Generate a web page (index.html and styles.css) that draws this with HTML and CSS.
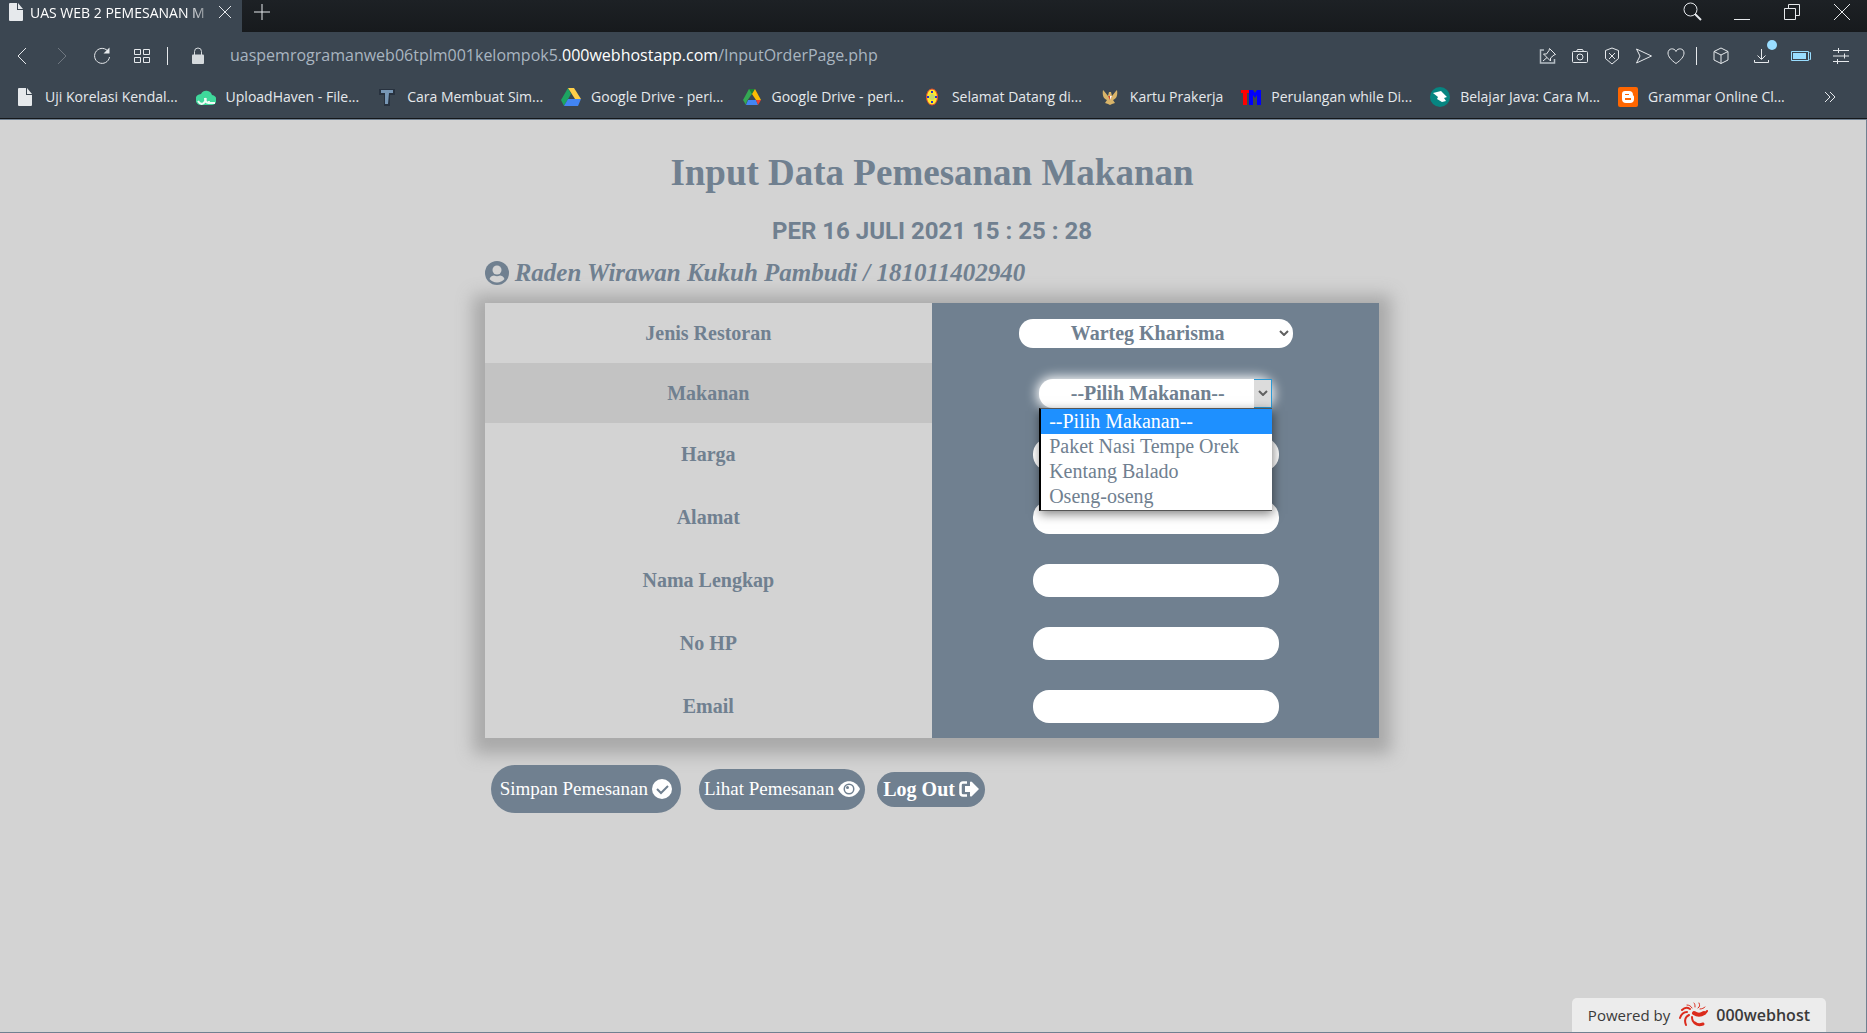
FILE: index.html
```html
<!DOCTYPE html>
<html lang="id">
<head>
<meta charset="utf-8">
<title>UAS WEB 2 PEMESANAN MAKANAN</title>
<link rel="stylesheet" href="styles.css">
</head>
<body>
<header class="browser">
  <div class="tabstrip">
    <div class="tab">
      <svg class="file" width="14" height="18" viewBox="0 0 14 18"><path fill="#e6e9ec" d="M1 0h7v7h6v10a1 1 0 0 1-1 1H1a1 1 0 0 1-1-1V1a1 1 0 0 1 1-1zM9 0l5 6H9z"/></svg>
      <span class="tab-title">UAS WEB 2 PEMESANAN M</span>
      <button class="icon-btn" aria-label="Tutup tab"><svg width="14" height="14" viewBox="0 0 14 14"><path d="M1 1l12 12M13 1L1 13"/></svg></button>
    </div>
    <button class="icon-btn new-tab" aria-label="Tab baru"><svg width="16" height="16" viewBox="0 0 16 16"><path d="M8 0v16M0 8h16"/></svg></button>
    <div class="window-buttons">
      <button class="icon-btn" aria-label="Cari"><svg width="20" height="20" viewBox="0 0 20 20"><circle cx="8.500" cy="7.500" r="6.500"/><path stroke-width="2" d="M13 12l6 6"/></svg></button>
      <button class="icon-btn" aria-label="Kecilkan"><svg width="20" height="20" viewBox="0 0 20 20"><path d="M2 17.500h16"/></svg></button>
      <button class="icon-btn" aria-label="Pulihkan"><svg width="20" height="20" viewBox="0 0 20 20"><path d="M2.500 6.500h11v11h-11zM6.500 6.500v-4h11v11h-4"/></svg></button>
      <button class="icon-btn" aria-label="Tutup"><svg width="20" height="20" viewBox="0 0 20 20"><path d="M2 2l16 16M18 2L2 18"/></svg></button>
    </div>
  </div>
  <div class="toolbar">
    <div class="nav">
      <button class="icon-btn" aria-label="Kembali"><svg width="20" height="20" viewBox="0 0 20 20"><path d="M14 2L6 10l8 8"/></svg></button>
      <button class="icon-btn dim" aria-label="Maju"><svg width="20" height="20" viewBox="0 0 20 20"><path d="M6 2l8 8-8 8"/></svg></button>
      <button class="icon-btn" aria-label="Muat ulang"><svg width="20" height="20" viewBox="0 0 20 20"><path d="M16.500 6A7.500 7.500 0 1 0 17.500 11"/><path fill="#e6e9ec" stroke="none" d="M17.500 1.500v6h-6z"/></svg></button>
      <button class="icon-btn" aria-label="Panggilan cepat"><svg width="20" height="20" viewBox="0 0 20 20"><path d="M2.500 3.500h6v5h-6zM11.500 3.500h6v5h-6zM2.500 11.500h6v5h-6zM11.500 11.500h6v5h-6z"/></svg></button>
    </div>
    <span class="divider"></span>
    <svg class="lock" width="12" height="18" viewBox="0 0 12 18"><path fill="none" stroke="#d5dadd" d="M2.500 8V4.500a3.500 3.500 0 0 1 7 0V8"/><rect y="7.500" width="12" height="9.500" rx="1" fill="#d5dadd"/></svg>
    <div class="url">uaspemrogramanweb06tplm001kelompok5.<strong>000webhostapp.com</strong>/InputOrderPage.php</div>
    <div class="tools">
      <button class="icon-btn" aria-label="Sematkan"><svg width="20" height="20" viewBox="0 0 20 20"><path stroke-width="1.500" stroke="#b5bdc4" d="M6 4H2.500v13h14v-4"/><path d="M11.500 2.500l6 6-1.500.5-3.500 3v3l-7-7h3l2.500-3.500zM9 11.500L5 15"/></svg></button>
      <button class="icon-btn" aria-label="Cuplikan"><svg width="20" height="20" viewBox="0 0 20 20"><rect x="2.500" y="5.500" width="15" height="11" rx="1"/><path d="M6.500 5.500l1-2h5l1 2"/><circle cx="10" cy="11" r="3"/></svg></button>
      <button class="icon-btn" aria-label="Pemblokir iklan"><svg width="20" height="20" viewBox="0 0 20 20"><path d="M10 2l6.500 2.500v8L10 18l-6.500-5.500v-8zM7 7l6 6M13 7l-6 6"/></svg></button>
      <button class="icon-btn" aria-label="Kirim"><svg width="20" height="20" viewBox="0 0 20 20"><path d="M2.500 3l15 7-15 7L6 10z"/></svg></button>
      <button class="icon-btn" aria-label="Bookmark"><svg width="20" height="20" viewBox="0 0 20 20"><path d="M10 17.500C5 14 2 10.500 2 7c0-5 6.500-5.500 8-1.500C11.500 1.500 18 2 18 7c0 3.500-3 7-8 10.500z"/></svg></button>
    </div>
    <span class="divider"></span>
    <div class="extras">
      <button class="icon-btn" aria-label="Ekstensi"><svg width="20" height="20" viewBox="0 0 20 20"><path d="M10 2l7 3.500v8.500l-7 3.500-7-3.500V5.500zM3 5.500L10 9l7-3.500M10 9v8.500"/></svg></button>
      <button class="icon-btn download" aria-label="Unduhan"><svg width="20" height="20" viewBox="0 0 20 20"><path d="M10.500 3v10M6.500 9.500l4 4 4-4M3.500 14v2.500h14V14"/></svg></button>
      <button class="icon-btn" aria-label="Baterai"><svg width="20" height="20" viewBox="0 0 20 20"><path stroke="#99ddff" d="M.5 5.500h17v9H.5zM18.500 6.500h1v7h-1"/><path fill="#99ddff" stroke="none" d="M2 7h13v6H2z"/></svg></button>
      <button class="icon-btn" aria-label="Pengaturan"><svg width="20" height="20" viewBox="0 0 20 20"><path d="M2 4.500h16M2 10h16M2 15.500h16M7.500 2v5M13.500 7.500v5M6.500 13v5"/></svg></button>
    </div>
  </div>
  <nav class="bookmarks">
    <a href="#"><svg width="20" height="18" viewBox="0 0 20 18"><path fill="#e6e9ec" d="M4 0h7v7h6v10a1 1 0 0 1-1 1H4a1 1 0 0 1-1-1V1a1 1 0 0 1 1-1zM12 0l5 6h-5z"/></svg>Uji Korelasi Kendal...</a>
    <a href="#"><svg width="20" height="18" viewBox="0 0 20 18"><path fill="#3fd89b" d="M5 6a6 6 0 0 1 11 1 5 5 0 0 1-1 10H5A5 5 0 0 1 5 6z"/><path fill="none" stroke="#eefbf5" stroke-width="2" d="M2 13c3 5 7 3 8-3M9 10c0 5 4 6 4 3M12 15h7"/></svg>UploadHaven - File...</a>
    <a href="#"><svg width="20" height="18" viewBox="0 0 20 18"><path fill="#28323f" d="M2 1h16v6h-5v11H7V7H2z"/><path fill="#7897b5" d="M4 2h12v3h-4l-1 11H8V5H4z"/></svg>Cara Membuat Sim...</a>
    <a href="#"><svg width="20" height="18" viewBox="0 0 20 18"><path fill="#1da462" d="M7 0L0 12l3 6 7-12z"/><path fill="#ffcf48" d="M7 0h6l7 11h-6z"/><path fill="#4285f4" d="M7 11h13l-3 7H3z"/></svg>Google Drive - peri...</a>
    <a href="#"><svg width="20" height="18" viewBox="0 0 20 18"><path fill="#34a853" d="M7 1h3v5L5 13l-1 4-3-5z"/><path fill="#188038" d="M7 1h6l-3 5z"/><path fill="#fbbc04" d="M13 1l6 11h-5l-4-6z"/><path fill="#4285f4" d="M6 12h8l2 5H4z"/><path fill="#ea4335" d="M14 12h5l-3 5z"/></svg>Google Drive - peri...</a>
    <a href="#"><svg width="20" height="18" viewBox="0 0 20 18"><ellipse cx="10" cy="9" rx="5.500" ry="8" fill="#ffe92b" stroke="#e6492d"/><circle cx="10" cy="9" r="3" fill="#c5db6a"/><path fill="#2a35c9" d="M9 3h2v2H9zM9 13h2v2H9zM5 8h2v2H5zM13 8h2v2h-2z"/></svg>Selamat Datang di...</a>
    <a href="#"><svg width="20" height="18" viewBox="0 0 20 18"><path fill="#d9b469" d="M3 2l1 1 4 5 1-4h2l1 4 4-5 1-1c1 6-1 9-4 10l2 3-3 1-2 1-2-1-3-1 2-3C4 11 2 8 3 2z"/><path fill="#cb4635" d="M8 8h4l-2 4z"/><path fill="#fff" d="M10 8h2l-2 4z"/></svg>Kartu Prakerja</a>
    <a href="#"><svg width="20" height="18" viewBox="0 0 20 18"><path fill="#f00" d="M0 2h8v3H6v12H2V5H0z"/><path fill="#00f" d="M8 2h4l2 3 2-3h4v15h-4V7l-2 3-2-3v10H8z"/></svg>Perulangan while Di...</a>
    <a href="#"><svg width="20" height="20" viewBox="0 0 20 20"><circle cx="10" cy="10" r="10" fill="#078581"/><path fill="#fff" d="M3 6l8-2 6 6-3 1 2 3-4 1-5-3 1-2z"/></svg>Belajar Java: Cara M...</a>
    <a href="#"><svg width="20" height="20" viewBox="0 0 20 20"><rect width="20" height="20" rx="2" fill="#ff6600"/><path fill="#fff" fill-rule="evenodd" d="M7 4h4a4 4 0 0 1 4 4c0 1 1 0 1 2v2a4 4 0 0 1-4 4H8a4 4 0 0 1-4-4V7a3 3 0 0 1 3-3zm0 3v1h4V7zm0 4v2h6v-2z"/></svg>Grammar Online Cl...</a>
    <button class="icon-btn more" aria-label="Bookmark lainnya"><svg width="12" height="12" viewBox="0 0 12 12"><path d="M1 1l5 5-5 5M6 1l5 5-5 5"/></svg></button>
  </nav>
</header>

<div class="page">
  <main class="order">
    <h1>Input Data Pemesanan Makanan</h1>
    <p class="clock">PER 16 JULI 2021 15 : 25 : 28</p>
    <p class="user">
      <svg width="24" height="24" viewBox="0 0 24 24"><circle cx="12" cy="12" r="12" fill="#708090"/><circle cx="12" cy="9" r="4.500" fill="#d3d3d3"/><path fill="#d3d3d3" d="M4.500 18c1-3 3-3.500 4.500-3.500 2 1 4 1 6 0 1.500 0 3.500.5 4.500 3.500a10 10 0 0 1-15 0z"/></svg>
      Raden Wirawan Kukuh Pambudi / 181011402940
    </p>
    <form id="order-form">
      <table class="fields">
        <tr>
          <th><label for="resto">Jenis Restoran</label></th>
          <td>
            <div class="pick pick-resto">
              <select id="resto"><option>Warteg Kharisma</option></select>
              <span class="arrow"><svg width="10" height="6" viewBox="0 0 10 6"><path d="M1 1l4 4 4-4"/></svg></span>
            </div>
          </td>
        </tr>
        <tr class="active">
          <th><label for="makanan">Makanan</label></th>
          <td>
            <div class="pick pick-open">
              <select id="makanan"><option>--Pilih Makanan--</option><option>Paket Nasi Tempe Orek</option><option>Kentang Balado</option><option>Oseng-oseng</option></select>
              <span class="arrow"><svg width="10" height="6" viewBox="0 0 10 6"><path d="M1 1l4 4 4-4"/></svg></span>
              <ul class="menu">
                <li class="selected">--Pilih Makanan--</li>
                <li>Paket Nasi Tempe Orek</li>
                <li>Kentang Balado</li>
                <li>Oseng-oseng</li>
              </ul>
            </div>
          </td>
        </tr>
        <tr class="text-row"><th><label for="harga">Harga</label></th><td><input id="harga" type="text"></td></tr>
        <tr class="text-row"><th><label for="alamat">Alamat</label></th><td><input id="alamat" type="text"></td></tr>
        <tr class="text-row"><th><label for="nama">Nama Lengkap</label></th><td><input id="nama" type="text"></td></tr>
        <tr class="text-row"><th><label for="hp">No HP</label></th><td><input id="hp" type="tel"></td></tr>
        <tr class="text-row"><th><label for="email">Email</label></th><td><input id="email" type="email"></td></tr>
      </table>
    </form>
    <div class="actions">
      <button class="save" type="submit" form="order-form">Simpan Pemesanan <svg width="20" height="20" viewBox="0 0 20 20"><circle cx="10" cy="10" r="10" fill="#fff"/><path fill="none" stroke="#708090" stroke-width="2" d="M5 10l4 4 7-7"/></svg></button>
      <button class="view" type="button">Lihat Pemesanan <svg width="22" height="16" viewBox="0 0 22 16"><path fill="#fff" d="M0 8c5-10.500 17-10.500 22 0-5 10.500-17 10.500-22 0z"/><circle cx="11" cy="8" r="5.500" fill="#708090"/><circle cx="11" cy="8" r="4" fill="#fff"/><circle cx="9.500" cy="6.500" r="1.500" fill="#708090"/></svg></button>
      <button class="logout" type="button">Log Out <svg width="20" height="16" viewBox="0 0 20 16"><path fill="none" stroke="#fff" stroke-width="2.500" d="M8 1.500H4A2.500 2.500 0 0 0 1.500 4v8A2.500 2.500 0 0 0 4 14.500h4"/><path fill="#fff" d="M6 5h5V1q1-1 2 0l7 7-7 7q-1 1-2 0v-4H6z"/></svg></button>
    </div>
  </main>
  <a class="badge" href="#">Powered by
    <svg width="30" height="26" viewBox="0 0 30 26"><g fill="none" stroke="#db2b1c" stroke-linecap="round"><path stroke-width="4" d="M26 11c-3 2-7 2-10 0"/><path stroke-width="2" d="M29 9c-1 2-3 3-5 3M14 15c0 3 1 5 3 6"/><path stroke-width="3" d="M17 21c2 2 5 2 8 1"/><path stroke-width="2" d="M11 13c-4 2-5 5-3 10M9 10c-4 0-6 3-7 6M12 7c-3-2-6-1-8 1"/><path stroke-width="1" d="M14 6c-1-2-3-3-5-3M17 5c0-2 0-3-1-4M20 6c2-1 2-3 1-5M22 7c2 0 4-1 5-2"/></g></svg>
    <strong>000webhost</strong>
  </a>
</div>
</body>
</html>
```
FILE: styles.css
```css
* { box-sizing: border-box; }

body {
  margin: 0;
  min-height: 100vh;
  display: flex;
  flex-direction: column;
  background: #d3d3d3;
  color: #708090;
  font-family: "Liberation Serif", "Times New Roman", serif;
  font-size: 20px;
}

button, input, select { font: inherit; color: inherit; border: 0; margin: 0; }

/* browser bar */
.browser {
  background: #3b4651;
  color: #e6e9ec;
  font-family: "Open Sans", "Noto Sans", sans-serif;
  font-size: 14px;
  border-bottom: 1px solid #14171a;
}

.icon-btn {
  display: flex;
  padding: 0;
  background: none;
}
.icon-btn svg { fill: none; stroke: #e6e9ec; }
.dim { opacity: 0.3; }

.tabstrip {
  display: flex;
  align-items: center;
  height: 32px;
  background: linear-gradient(#1d2125, #171a1d);
}
.tab {
  display: flex;
  align-items: center;
  width: 242px;
  height: 32px;
  padding: 0 10px 8px 9px;
  background: #3b4651;
  color: #fff;
}
.tab-title {
  flex: 1;
  margin: 0 2px 0 7px;
  white-space: nowrap;
  -webkit-mask-image: linear-gradient(to right, #000 85%, transparent);
  mask-image: linear-gradient(to right, #000 85%, transparent);
}
.new-tab { margin: 0 0 8px 12px; }
.window-buttons {
  display: flex;
  gap: 30px;
  margin: 0 15px 8px auto;
}

.toolbar {
  display: flex;
  align-items: center;
  height: 48px;
  padding: 0 16px 0 12px;
}
.nav, .extras { display: flex; gap: 20px; }
.nav { margin-right: 15px; }
.tools { display: flex; gap: 12px; margin-right: 10px; }
.extras { margin-left: 14px; }
.divider { width: 1px; height: 18px; background: #e6e9ec; }
.lock { margin: 0 26px 0 24px; }
.url { flex: 1; padding-bottom: 2px; font-size: 16px; color: #a9b5c0; }
.url strong { font-weight: 400; color: #fff; }
.download { position: relative; }
.download::after {
  content: "";
  position: absolute;
  right: -6px;
  top: -6px;
  width: 10px;
  height: 10px;
  border-radius: 50%;
  background: #99ddff;
}

.bookmarks {
  display: flex;
  align-items: center;
  gap: 18px;
  height: 38px;
  padding: 0 31px 5px 15px;
}
.bookmarks a {
  display: flex;
  align-items: center;
  gap: 10px;
  color: inherit;
  text-decoration: none;
  white-space: nowrap;
}
.more { margin-left: auto; }

/* page */
.page {
  flex: 1;
  display: flex;
  flex-direction: column;
  padding-right: 2px;
  border: 1px solid #708090;
  border-left: 0;
}
.order { width: 48%; margin: 0 auto; }

h1 {
  margin: 32px 0 21px;
  font-size: 37px;
  line-height: 42px;
  text-align: center;
}
.clock {
  margin: 0 0 10px;
  font-family: Roboto, "Liberation Sans", sans-serif;
  font-size: 24px;
  line-height: 32px;
  font-weight: 700;
  text-align: center;
}
.user {
  display: flex;
  align-items: center;
  gap: 6px;
  margin: 0 0 14px;
  font-size: 25px;
  line-height: 32px;
  font-weight: 700;
  font-style: italic;
  white-space: nowrap;
}

.fields {
  width: 100%;
  table-layout: fixed;
  border-collapse: collapse;
  box-shadow: 0 4px 16px 12px #a9a9a9;
}
.fields th, .fields td { height: 60px; padding: 0; }
.fields .text-row th, .fields .text-row td { height: 63px; }
.fields th { background: #d3d3d3; }
.fields .active th { background: #c3c3c3; }
.fields td { background: #708090; }
.fields input {
  display: block;
  width: 55%;
  height: 33px;
  margin: 0 auto;
  padding: 0 16px;
  border-radius: 16px;
  background: #fff;
}

.pick {
  position: relative;
  display: grid;
  height: 29px;
  margin: 0 auto;
}
.pick-resto { width: 274px; }
.pick-open { width: 233px; }
.pick select, .arrow { grid-area: 1 / 1; }
.pick select {
  appearance: none;
  width: 100%;
  height: 29px;
  padding: 0 16px 0 0;
  border-radius: 14px;
  background: #fff;
  font-weight: 700;
  line-height: 29px;
  text-align: center;
  text-align-last: center;
}
.pick-open select { box-shadow: 0 0 12px 2px #fff; }
.arrow {
  display: flex;
  align-items: center;
  justify-content: center;
  justify-self: end;
  width: 18px;
  pointer-events: none;
}
.arrow svg { fill: none; stroke: #606060; stroke-width: 2; }
.pick-open .arrow {
  z-index: 1;
  background: #dcdcdc;
  border: 1px solid #2a9ad6;
  border-left: 0;
}
.menu {
  position: absolute;
  z-index: 2;
  top: 100%;
  left: 0;
  width: 100%;
  margin: 0;
  padding: 0 0 1px;
  list-style: none;
  background: #fff;
  border: 1px solid #555;
  border-left: 2px solid #000;
  border-right: 0;
  box-shadow: 1px 3px 10px rgba(0, 0, 0, 0.5);
  line-height: 25px;
  white-space: nowrap;
}
.menu li { padding-left: 8px; }
.menu .selected { background: #1e90ff; color: #fff; }

.actions {
  display: flex;
  align-items: center;
  margin: 27px 0 0 6px;
}
.actions button {
  display: flex;
  align-items: center;
  gap: 4px;
  border-radius: 24px;
  background: #708090;
  color: #fff;
  font-size: 19px;
  white-space: nowrap;
}
.actions .save { height: 48px; padding: 0 9px; margin-right: 18px; }
.actions .view { height: 41px; padding: 0 5px; margin-right: 12px; }
.actions .logout { height: 35px; padding: 0 6px; font-size: 20px; font-weight: 700; }

.badge {
  display: flex;
  align-items: center;
  align-self: flex-end;
  height: 34px;
  margin: auto 38px 0 0;
  padding: 0 16px;
  gap: 8px;
  border-radius: 5px 5px 0 0;
  background: #ececec;
  color: #3a3a3a;
  font-family: "Open Sans", "Noto Sans", sans-serif;
  font-size: 15px;
  text-decoration: none;
}
.badge strong { font-size: 16px; font-weight: 600; }
```
